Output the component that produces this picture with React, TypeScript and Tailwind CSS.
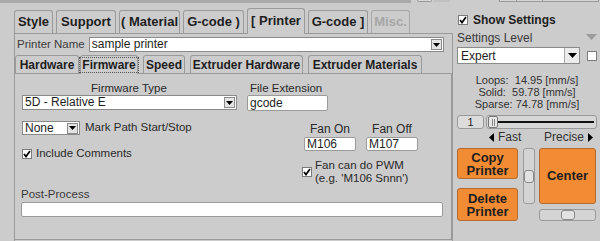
import React from "react";

const Check = ({ checked = true }: { checked?: boolean }) => (
  <div className="w-[10px] h-[10px] bg-white border border-[#7a7a7a] flex items-center justify-center shrink-0">
    {checked && (
      <svg width="8" height="8" viewBox="0 0 8 8">
        <path d="M1 4 L3 6.6 L7 1" fill="none" stroke="#000" strokeWidth="1.7" />
      </svg>
    )}
  </div>
);

const ArrowBox = () => (
  <div className="w-[11px] h-[11px] mr-[1px] bg-[#e4e4e4] border border-[#8a8a8a] flex items-center justify-center shrink-0">
    <svg width="7" height="4" viewBox="0 0 7 4">
      <path d="M0 0 H7 L3.5 4 Z" fill="#000" />
    </svg>
  </div>
);

export default function App() {
  return (
    <div className="w-[600px] h-[241px] bg-[#cccccc] flex flex-col overflow-hidden font-['Liberation_Sans',Arial,sans-serif] text-[#1e1e1e]">
      {/* top strip */}
      <div className="h-[3px] flex shrink-0">
        <div className="w-[411px] h-[3px] bg-[#a9a9a9]" />
        <div className="ml-[6px] w-[15px] h-[2px] border-x border-b border-[#9a9a9a] rounded-b-[3px] bg-[#d8d8d8]" />
        <div className="ml-[2px] w-[16px] h-[2px] bg-[#c0c0c0]" />
        <div className="ml-[49px] w-[18px] h-[2px] border-x border-b border-[#9a9a9a] bg-[#d4d4d4]" />
        <div className="w-[26px] h-[2px] border-r border-b border-[#9a9a9a] bg-[#d4d4d4]" />
        <div className="w-[56px] h-[2px] border-r border-b border-[#9a9a9a] bg-[#d4d4d4]" />
      </div>

      <div className="flex flex-1">
        {/* LEFT COLUMN */}
        <div className="w-[455px] flex flex-col shrink-0">
          {/* main tabs */}
          <div className="h-[30px] pl-[14px] flex items-end gap-[3px] relative z-10 text-[13px] font-bold">
            <div className="w-[39px] h-[23px] border-x border-t border-[#9a9a9a] rounded-t-[3px] flex items-center justify-center">Style</div>
            <div className="w-[60px] h-[23px] border-x border-t border-[#9a9a9a] rounded-t-[3px] flex items-center justify-center">Support</div>
            <div className="w-[61px] h-[23px] border-x border-t border-[#9a9a9a] rounded-t-[3px] flex items-center justify-center whitespace-pre">( Material</div>
            <div className="w-[61px] h-[23px] border-x border-t border-[#9a9a9a] rounded-t-[3px] flex items-center justify-center whitespace-pre">G-code )</div>
            <div className="w-[58px] h-[26px] -mb-px border-x border-t border-[#9a9a9a] rounded-t-[3px] bg-[#cccccc] flex items-center justify-center pb-[2px] whitespace-pre">[ Printer</div>
            <div className="w-[60px] h-[23px] border-x border-t border-[#9a9a9a] rounded-t-[3px] flex items-center justify-center whitespace-pre">G-code ]</div>
            <div className="w-[39px] h-[23px] border-x border-t border-[#a8a8a8] rounded-t-[3px] flex items-center justify-center text-[#a6a6a6]">Misc.</div>
          </div>

          {/* outer panel */}
          <div className="ml-[14px] w-[439px] flex-1 border-x border-t border-[#9a9a9a] flex flex-col pb-[1px]">
            {/* printer name */}
            <div className="mt-[3px] h-[15px] flex items-center text-[11.5px]">
              <span className="ml-[2px] text-[#3c3c3c]">Printer Name</span>
              <div className="ml-[4px] w-[355px] h-[15px] bg-white border border-[#8a8a8a] flex items-center justify-between">
                <span className="pl-[2px] text-[12px] leading-[13px]">sample printer</span>
                <ArrowBox />
              </div>
            </div>

            {/* sub tabs */}
            <div className="mt-[3px] h-[18px] flex items-end relative z-10 text-[12px] font-bold">
              <div className="w-[64px] h-[18px] border-x border-t border-[#9a9a9a] rounded-t-[3px] flex items-center justify-center">Hardware</div>
              <div className="ml-[1px] w-[58px] h-[19px] -mb-px border-x border-t border-[#9a9a9a] rounded-t-[3px] bg-[#cccccc] flex items-start justify-center pt-[1px]">
                <span className="px-[2px] border border-dotted border-[#555] leading-[14px]">Firmware</span>
              </div>
              <div className="ml-[5px] w-[42px] h-[18px] border-x border-t border-[#9a9a9a] rounded-t-[3px] flex items-center justify-center">Speed</div>
              <div className="ml-[5px] w-[113px] h-[18px] border-x border-t border-[#9a9a9a] rounded-t-[3px] flex items-center justify-center">Extruder Hardware</div>
              <div className="ml-[5px] w-[114px] h-[18px] border-x border-t border-[#9a9a9a] rounded-t-[3px] flex items-center justify-center">Extruder Materials</div>
            </div>

            {/* inner panel */}
            <div className="flex-1 border-t border-r border-b border-[#9a9a9a] pl-[6px] flex flex-col text-[11.5px]">
              {/* section A */}
              <div className="mt-[7px] flex">
                <div className="w-[216px] flex flex-col">
                  <div className="h-[14px] leading-[14px] text-center text-[#2a2a2a]">Firmware Type</div>
                  <div className="ml-[1px] w-[215px] h-[15px] bg-white border border-[#8a8a8a] flex items-center justify-between">
                    <span className="pl-[2px] text-[12px] leading-[13px]">5D - Relative E</span>
                    <ArrowBox />
                  </div>
                </div>
                <div className="ml-[10px] w-[81px] flex flex-col">
                  <div className="h-[14px] leading-[14px] pl-[3px] text-[#2a2a2a] whitespace-nowrap">File Extension</div>
                  <div className="w-[81px] h-[16px] bg-white border border-[#9a9a9a] rounded-[2px] flex items-center">
                    <span className="pl-[2px] text-[12px] leading-[13px]">gcode</span>
                  </div>
                </div>
              </div>

              {/* section B */}
              <div className="mt-[10px] flex">
                <div className="w-[281px] flex flex-col">
                  <div className="h-[14px] flex items-center">
                    <div className="ml-[1px] w-[58px] h-[14px] bg-white border border-[#8a8a8a] flex items-center justify-between">
                      <span className="pl-[2px] text-[12px] leading-[13px]">None</span>
                      <ArrowBox />
                    </div>
                    <span className="ml-[5px] text-[#2a2a2a]">Mark Path Start/Stop</span>
                  </div>
                  <div className="mt-[14px] h-[10px] flex items-center">
                    <div className="ml-[1px]"><Check /></div>
                    <span className="ml-[4px] text-[#2a2a2a]">Include Comments</span>
                  </div>
                </div>
                <div className="flex flex-col">
                  <div className="ml-[2px] flex">
                    <div className="w-[52px] flex flex-col">
                      <div className="h-[16px] leading-[16px] text-center text-[12px] text-[#2a2a2a]">Fan On</div>
                      <div className="h-[14px] bg-white border border-[#9a9a9a] rounded-[2px] flex items-center">
                        <span className="pl-[2px] text-[12px] leading-[13px]">M106</span>
                      </div>
                    </div>
                    <div className="ml-[10px] w-[52px] flex flex-col">
                      <div className="h-[16px] leading-[16px] text-center text-[12px] text-[#2a2a2a]">Fan Off</div>
                      <div className="h-[14px] bg-white border border-[#9a9a9a] rounded-[2px] flex items-center">
                        <span className="pl-[2px] text-[12px] leading-[13px]">M107</span>
                      </div>
                    </div>
                  </div>
                  <div className="mt-[8px] flex items-center">
                    <Check />
                    <div className="ml-[3px] leading-[13px] text-[#2a2a2a]">
                      <div>Fan can do PWM</div>
                      <div>(e.g. 'M106 Snnn')</div>
                    </div>
                  </div>
                </div>
              </div>

              {/* post process */}
              <div className="mt-[2px] h-[14px] leading-[14px] text-[#3a3a3a]">Post-Process</div>
              <div className="mt-[1px] w-[422px] h-[15px] bg-white border border-[#9a9a9a] rounded-[2px]" />
            </div>
          </div>
        </div>

        {/* RIGHT COLUMN */}
        <div className="flex-1 flex flex-col pl-[2px] pr-[4px]">
          <div className="mt-[12px] h-[10px] flex items-center">
            <div className="ml-[1px]"><Check /></div>
            <span className="ml-[5px] text-[12px] font-bold">Show Settings</span>
          </div>
          <div className="mt-[7px] h-[12px] flex items-center justify-between">
            <span className="text-[12px] text-[#3a3a3a]">Settings Level</span>
            <svg width="11" height="6" viewBox="0 0 11 6" className="mt-[-2px]">
              <path d="M0 0 H11 L5.5 6 Z" fill="#9c9c9c" />
            </svg>
          </div>
          <div className="mt-[3px] flex items-center">
            <div className="w-[123px] h-[17px] bg-white border border-[#8a8a8a] flex items-center justify-between">
              <span className="pl-[3px] text-[12px]">Expert</span>
              <div className="w-[15px] h-[15px] bg-[#ececec] border-l border-[#aaa] flex items-center justify-center">
                <svg width="9" height="5" viewBox="0 0 9 5">
                  <path d="M0 0 H9 L4.5 5 Z" fill="#000" />
                </svg>
              </div>
            </div>
            <div className="ml-[7px]"><Check checked={false} /></div>
          </div>
          <div className="mt-[10px] flex flex-col items-center text-[11px] leading-[12px] text-[#333] whitespace-pre">
            <div>Loops:  14.95 [mm/s]</div>
            <div>Solid:  59.78 [mm/s]</div>
            <div>Sparse: 74.78 [mm/s]</div>
          </div>
          {/* slider */}
          <div className="mt-[5px] h-[14px] flex">
            <div className="w-[27px] h-[14px] bg-[#dcdcdc] border border-[#9a9a9a] rounded-[3px] flex items-center justify-center text-[11px]">1</div>
            <div className="ml-[2px] flex-1 h-[14px] bg-[#d6d6d6] border border-[#9a9a9a] rounded-[3px] flex items-center pl-[1px] pr-[2px]">
              <div className="w-[10px] h-[12px] bg-[#e6e6e6] border border-[#777] rounded-[2px] flex items-center justify-center shrink-0">
                <div className="w-[3px] h-[7px] border-x border-[#888]" />
              </div>
              <div className="flex-1 h-[2px] bg-[#111]" />
            </div>
          </div>
          <div className="mt-[2px] h-[12px] flex items-center justify-between pl-[32px] pr-[4px] text-[12px] text-[#333]">
            <div className="flex items-center">
              <svg width="5" height="9" viewBox="0 0 5 9"><path d="M5 0 V9 L0 4.5 Z" fill="#000" /></svg>
              <span className="ml-[4px]">Fast</span>
            </div>
            <div className="flex items-center">
              <span className="mr-[4px]">Precise</span>
              <svg width="5" height="9" viewBox="0 0 5 9"><path d="M0 0 V9 L5 4.5 Z" fill="#000" /></svg>
            </div>
          </div>
          {/* buttons */}
          <div className="mt-[5px] flex">
            <div className="w-[61px] flex flex-col">
              <div className="h-[31px] bg-[#f28c34] border border-[#b36b2f] rounded-[3px] flex flex-col items-center justify-center text-[13px] font-bold leading-[13px]">
                <span>Copy</span>
                <span>Printer</span>
              </div>
              <div className="mt-[9px] h-[33px] bg-[#f28c34] border border-[#b36b2f] rounded-[3px] flex flex-col items-center justify-center text-[13px] font-bold leading-[13px]">
                <span>Delete</span>
                <span>Printer</span>
              </div>
            </div>
            <div className="ml-[5px] w-[12px] h-[56px] bg-[#d4d4d4] border border-[#9a9a9a] rounded-[3px] flex flex-col items-center">
              <div className="mt-[21px] w-[10px] h-[13px] bg-[#e2e2e2] border border-[#888] rounded-[3px]" />
            </div>
            <div className="ml-[4px] w-[57px] flex flex-col">
              <div className="h-[56px] bg-[#f28c34] border border-[#b36b2f] rounded-[3px] flex items-center justify-center text-[13px] font-bold">
                Center
              </div>
              <div className="mt-[5px] h-[12px] bg-[#d4d4d4] border border-[#9a9a9a] rounded-[3px] flex items-center">
                <div className="ml-[21px] w-[14px] h-[10px] bg-[#e2e2e2] border border-[#888] rounded-[3px]" />
              </div>
            </div>
          </div>
        </div>
      </div>
    </div>
  );
}
